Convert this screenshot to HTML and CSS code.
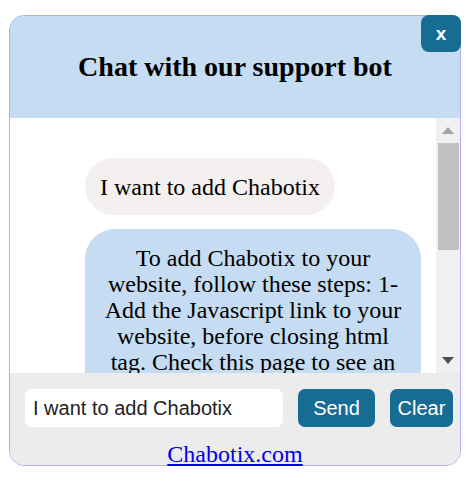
FILE: index.html
```html
<!DOCTYPE html>
<html>
<head>
<meta charset="utf-8">
<link rel="stylesheet" href="styles.css">
</head>
<body>
<div class="widget">
  <div class="header">
    <h2 class="title">Chat with our support bot</h2>
    <button class="close">x</button>
  </div>
  <div class="chat">
    <div class="messages">
      <div class="msg user">I want to add Chabotix</div>
      <div class="msg bot">To add Chabotix to your website, follow these steps: 1- Add the Javascript link to your website, before closing html tag. Check this page to see an example of the code. 2- Add your content to Chabotix from the dashboard. 3- Customize the widget colors and texts. 4- Save and test it on your site.</div>
    </div>
    <div class="scrollbar">
      <div class="sb-btn">
        <svg width="12" height="7" viewBox="0 0 12 7"><polygon points="6,0 12,7 0,7" fill="#a3a3a3"/></svg>
      </div>
      <div class="sb-track">
        <div class="sb-thumb"></div>
      </div>
      <div class="sb-btn">
        <svg width="12" height="7" viewBox="0 0 12 7"><polygon points="0,0 12,0 6,7" fill="#505050"/></svg>
      </div>
    </div>
  </div>
  <div class="footer">
    <div class="row">
      <input class="field" type="text" value="I want to add Chabotix">
      <button class="btn send">Send</button>
      <button class="btn clear">Clear</button>
    </div>
    <div class="linkwrap"><a class="link" href="#">Chabotix.com</a></div>
  </div>
</div>
</body>
</html>
```

FILE: styles.css
```css
html, body {
  margin: 0;
  padding: 0;
  background: #ffffff;
}

body {
  font-family: "Liberation Serif", "Times New Roman", serif;
}

.widget {
  position: relative;
  box-sizing: border-box;
  width: 452px;
  margin: 15px 0 0 9px;
  border: 1px solid #a9b0f5;
  border-radius: 15px;
}

.header {
  height: 102px;
  background: #c5dcf2;
  border-radius: 14px 14px 0 0;
  display: flex;
  align-items: center;
  justify-content: center;
}

.title {
  margin: 0;
  font-size: 28px;
  font-weight: bold;
  line-height: 32px;
  color: #000;
}

.close {
  position: absolute;
  top: -1px;
  right: -1px;
  width: 40px;
  height: 37px;
  border: none;
  border-radius: 8px;
  background: #176c94;
  color: #fff;
  font-family: "Liberation Sans", Arial, sans-serif;
  font-weight: bold;
  font-size: 19px;
  padding: 0;
}

.chat {
  height: 255px;
  display: flex;
  background: #fff;
}

.messages {
  flex: 1;
  overflow: hidden;
  box-sizing: border-box;
  padding: 40px 15px 0 75px;
}

.scrollbar {
  width: 24px;
  background: #f1f1f1;
  display: flex;
  flex-direction: column;
}

.sb-btn {
  height: 25px;
  display: flex;
  align-items: center;
  justify-content: center;
}

.sb-track {
  flex: 1;
  padding: 0 1px 0 2px;
}

.sb-thumb {
  height: 107px;
  background: #c1c1c1;
}

.msg {
  font-size: 24px;
  line-height: 26px;
  color: #000;
  padding: 15px;
}

.user {
  display: inline-block;
  background: #f4f0f0;
  border-radius: 29px;
  padding-top: 16px;
  padding-bottom: 15px;
}

.bot {
  margin-top: 14px;
  background: #c5dcf2;
  border-radius: 30px;
  text-align: center;
  padding-top: 16px;
}

.footer {
  height: 92px;
  background: #ececec;
  border-radius: 0 0 14px 14px;
  box-sizing: border-box;
  padding-top: 16px;
}

.row {
  display: flex;
  gap: 15px;
  padding: 0 6px 0 15px;
}

.field {
  box-sizing: border-box;
  width: 258px;
  height: 38px;
  border: none;
  border-radius: 7px;
  background: #fff;
  font-family: "Liberation Sans", Arial, sans-serif;
  font-size: 20px;
  color: #222;
  padding: 0 8px;
  outline: none;
}

.btn {
  height: 38px;
  border: none;
  border-radius: 7px;
  background: #176c94;
  color: #fff;
  font-family: "Liberation Sans", Arial, sans-serif;
  font-size: 20px;
  padding: 0;
}

.send {
  width: 77px;
}

.clear {
  width: 63px;
}

.linkwrap {
  text-align: center;
  margin-top: 14px;
}

.link {
  font-size: 24px;
  line-height: 27px;
  color: #0000ee;
  text-decoration: underline;
}
```
